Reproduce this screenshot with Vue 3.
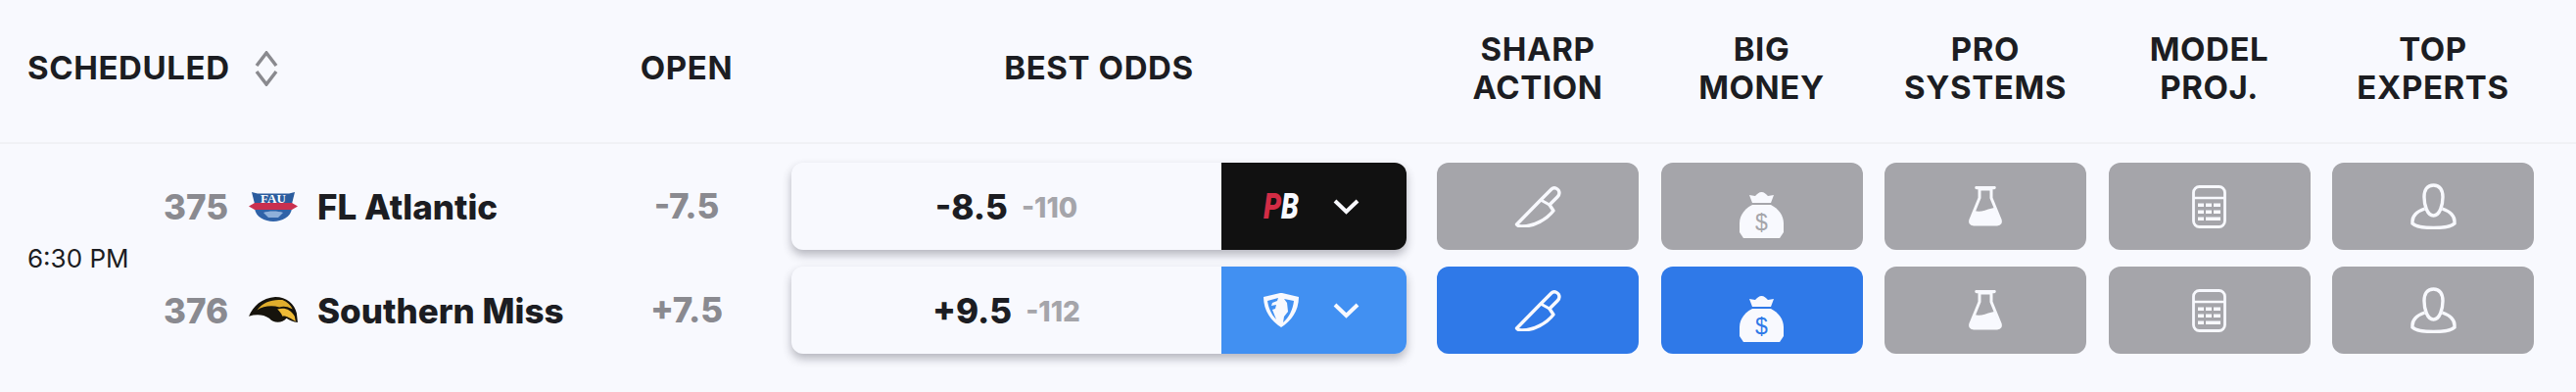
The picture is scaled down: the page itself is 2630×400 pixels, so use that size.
<template>
  <div class="board">
    <div class="head">
      <div class="h-game">
        <span>SCHEDULED</span>
        <svg class="sort" viewBox="0 0 24 36" width="24" height="36">
          <path d="M2 15 12 2 22 15M2 21 12 34 22 21" fill="none" stroke="#8a8a8f" stroke-width="3.5" />
        </svg>
      </div>
      <div class="h-open">OPEN</div>
      <div class="h-odds">BEST ODDS</div>
      <div class="signals h-signals">
        <div v-for="h in headers" :key="h[0]">{{ h[0] }}<br />{{ h[1] }}</div>
      </div>
    </div>

    <div class="body">
      <div class="time">6:30 PM</div>

      <div class="teams">
        <div v-for="t in games" :key="t.num" class="team">
          <span class="num">{{ t.num }}</span>
          <svg v-if="t.num === 375" class="logo" viewBox="0 0 50 30" width="50" height="30">
            <path d="M3 0 9 1.500H41L47 0 44 12H6Z" fill="#2b5c9e" />
            <text x="25" y="10.500" class="fau">FAU</text>
            <path d="M6 17H44C43 25 34 30 25 30 16 30 7 25 6 17Z" fill="#2f62a8" />
            <path d="M15 21C20 19 30 19 35 21L30 26H20Z" fill="#8fb0da" />
            <path d="M0 14.500 6 11H44L50 14.500 44 18H6Z" fill="#c9304f" />
          </svg>
          <svg v-else class="logo" viewBox="0 0 48 26" width="50" height="27">
            <path d="M0 19C4 9 13 1 26 0 37 0 45 7 47 16L48 25C44 25 40 23 37 21 33 26 24 26 20 21 14 17 7 17 0 19Z" fill="#16130c" />
            <path d="M8 13C14 5 23 2 33 3 38 5 41 8 43 12 37 9 34 9 30 10 22 8 14 9 8 13Z" fill="#e0ad2c" />
            <path d="M28 12C35 10 41 12 45 19L46 24C41 21 36 18 33 19 32 16 30 14 28 12Z" fill="#eeba36" />
          </svg>
          <span class="name">{{ t.name }}</span>
        </div>
      </div>

      <div class="open">
        <div v-for="t in games" :key="t.num" class="open-val">{{ t.open }}</div>
      </div>

      <div class="odds">
        <div v-for="t in games" :key="t.num" class="odds-box">
          <div class="line">
            <b>{{ t.line }}</b><span>{{ t.price }}</span>
          </div>
          <div class="book" :class="t.book">
            <div v-if="t.book === 'pb'" class="pb-logo"><i>P</i><em>B</em></div>
            <svg v-else class="fd-logo" viewBox="0 0 36 35" width="36" height="35">
              <path d="M0 4 17 0H19L36 4C36 18 28 29 18 35 8 29 0 18 0 4Z" fill="#f8f9fe" />
              <path d="M21 6 31 8C30 17 26 25 20 30L21 24 25 19 24 10ZM4 8 15 5 14 8 9 10 8 13 13 12 12 16 9 17 13 27C8 22 5 15 4 8Z" fill="#4190f2" />
            </svg>
            <svg class="chev" viewBox="0 0 27 17" width="27" height="17">
              <path d="M2 3 13.5 14 25 3" fill="none" stroke="#f8f9fe" stroke-width="4" />
            </svg>
          </div>
        </div>
      </div>

      <div class="signals grid-btns">
        <template v-for="(t, r) in games" :key="t.num">
          <div v-for="(s, c) in icons" :key="s" class="sig" :class="{ on: r === 1 && c < 2 }">
            <svg v-if="s === 'knife'" viewBox="0 0 48 43" width="48" height="43">
              <path d="M2.5 40 27 15 38 4C41 1 46 4 46 8 46 10 45 11 44 12L36 20 40 26C33 35 20 42 8 42 5 42 3 41 2.5 40Z" fill="none" stroke="#f8f9fe" stroke-width="3.4" stroke-linejoin="round" />
              <path d="M27 15 36 20" stroke="#f8f9fe" stroke-width="3" />
            </svg>
            <svg v-else-if="s === 'bag'" class="bag" viewBox="0 0 45 47" width="45" height="47">
              <path d="M10 3 16 4C18 2 20 0 22.500 0 25 0 27 2 29 4L35 3 32 11H13Z" fill="#f8f9fe" />
              <path d="M13 13H32C40 17 45 24 45 32V41L41 47H4L0 41V32C0 24 5 17 13 13Z" fill="#f8f9fe" />
              <text x="22.500" y="39" class="dollar" :fill="r === 1 ? '#2f79e8' : '#a5a5aa'">$</text>
            </svg>
            <svg v-else-if="s === 'flask'" viewBox="0 0 36 41" width="36" height="41">
              <path d="M12 3H24V12L33 34C34 37 33 39 30 39H6C3 39 2 37 3 34L12 12Z" fill="none" stroke="#f8f9fe" stroke-width="3" stroke-linejoin="round" />
              <path d="M9 1.500H27" stroke="#f8f9fe" stroke-width="3.400" stroke-linecap="round" />
              <path d="M7 25C13 27 18 24 27 22L33 36C33 38 32 40 30 40H6C3 40 2 38 3 35Z" fill="#f8f9fe" />
            </svg>
            <svg v-else-if="s === 'calc'" viewBox="0 0 35 44" width="35" height="44">
              <rect x="1.500" y="1.500" width="32" height="41" rx="6" fill="none" stroke="#f8f9fe" stroke-width="2.800" />
              <path d="M2 13H33" stroke="#f8f9fe" stroke-width="2.500" />
              <path d="M6 18.500h6v3.500h-6zM14 18.500h6v3.500h-6zM22 18.500h7v3.500h-7zM6 25.500h6v3.500h-6zM14 25.500h6v3.500h-6zM22 25.500h7v3.500h-7zM6 32.500h6v3.500h-6zM14 32.500h15v3.500h-15z" fill="#f8f9fe" />
            </svg>
            <svg v-else viewBox="0 0 47 47" width="47" height="47">
              <path d="M23.500 2C17 2 14 7 14 14 14 22 17 33 23.500 33 30 33 33 22 33 14 33 7 30 2 23.500 2Z" fill="none" stroke="#f8f9fe" stroke-width="3.400" />
              <path d="M14.500 26C6 29 2 33 2 39V41C8 47 39 47 45 41V39C45 33 41 29 32.500 26" fill="none" stroke="#f8f9fe" stroke-width="3.400" />
            </svg>
          </div>
        </template>
      </div>
    </div>
  </div>
</template>

<script setup>
const headers = [
  ['SHARP', 'ACTION'],
  ['BIG', 'MONEY'],
  ['PRO', 'SYSTEMS'],
  ['MODEL', 'PROJ.'],
  ['TOP', 'EXPERTS'],
]

const icons = ['knife', 'bag', 'flask', 'calc', 'person']

const games = [
  { num: 375, name: 'FL Atlantic', open: '-7.5', line: '-8.5', price: '-110', book: 'pb' },
  { num: 376, name: 'Southern Miss', open: '+7.5', line: '+9.5', price: '-112', book: 'fd' },
]
</script>

<style>
html,
body {
  margin: 0;
  background: #f8f9fe;
}
</style>

<style scoped>
.board {
  width: 2630px;
  height: 400px;
  font-family: Inter, 'Liberation Sans', sans-serif;
  color: #1c1d22;
  background: #f8f9fe;
}
.head {
  display: flex;
  align-items: center;
  box-sizing: border-box;
  height: 147px;
  padding: 0 0 6px 28px;
  border-bottom: 2px solid #f0f1f5;
  font-size: 33px;
  font-weight: 700;
  letter-spacing: 0.6px;
  line-height: 39px;
}
.h-game {
  width: 572px;
  display: flex;
  align-items: center;
  gap: 25px;
}
.h-open {
  width: 202px;
  text-align: center;
}
.h-odds {
  width: 628px;
  margin-left: 6px;
  text-align: center;
}
.signals {
  display: grid;
  grid-template-columns: repeat(5, 206px);
  column-gap: 22.500px;
  margin-left: 31px;
}
.h-signals {
  text-align: center;
}
.body {
  display: flex;
  padding: 19px 0 0 28px;
}
.time {
  width: 139px;
  align-self: center;
  font-size: 26px;
}
.teams,
.open,
.odds {
  display: flex;
  flex-direction: column;
  gap: 17px;
}
.teams {
  width: 433px;
}
.team {
  height: 89px;
  display: flex;
  align-items: center;
}
.num {
  width: 87px;
  font-size: 35px;
  font-weight: 800;
  color: #8a8a90;
}
.logo {
  flex: none;
}
.fau {
  font-family: 'Liberation Serif', serif;
  font-size: 13px;
  font-weight: 700;
  text-anchor: middle;
  fill: #fff;
}
.name {
  margin-left: 20px;
  font-size: 35px;
  font-weight: 800;
}
.open {
  width: 202px;
}
.open-val {
  height: 89px;
  line-height: 89px;
  text-align: center;
  font-size: 35px;
  font-weight: 800;
  color: #8a8a90;
}
.odds {
  width: 628px;
  margin-left: 6px;
}
.odds-box {
  display: flex;
  height: 89px;
  border-radius: 12px;
  overflow: hidden;
  box-shadow: 0 5px 10px rgba(40, 40, 55, 0.32);
}
.line {
  width: 439px;
  display: flex;
  align-items: center;
  justify-content: center;
  gap: 14px;
}
.line b {
  font-size: 35px;
  font-weight: 800;
}
.line span {
  font-size: 28px;
  font-weight: 800;
  color: #a5a5aa;
  margin-top: 3px;
}
.book {
  flex: 1;
  display: flex;
  align-items: center;
  padding-left: 43px;
}
.book.pb {
  background: #111;
}
.book.fd {
  background: #4190f2;
}
.pb-logo {
  width: 36px;
  flex: none;
  font-family: Roboto, sans-serif;
  font-size: 36px;
  font-weight: 900;
  font-style: italic;
  line-height: 1;
  display: flex;
  justify-content: center;
  transform: scaleX(0.8);
}
.pb-logo i {
  color: #d22c45;
}
.pb-logo em {
  color: #f8f9fe;
}
.fd-logo {
  flex: none;
}
.chev {
  flex: none;
  margin-left: 35px;
}
.grid-btns {
  row-gap: 17px;
  align-self: start;
}
.sig {
  height: 89px;
  border-radius: 12px;
  background: #a5a5aa;
  display: flex;
  align-items: center;
  justify-content: center;
}
.sig.on {
  background: #2f79e8;
}
.bag {
  margin-top: 18px;
}
.dollar {
  font-family: 'Liberation Sans', sans-serif;
  font-size: 23px;
  text-anchor: middle;
}
</style>
